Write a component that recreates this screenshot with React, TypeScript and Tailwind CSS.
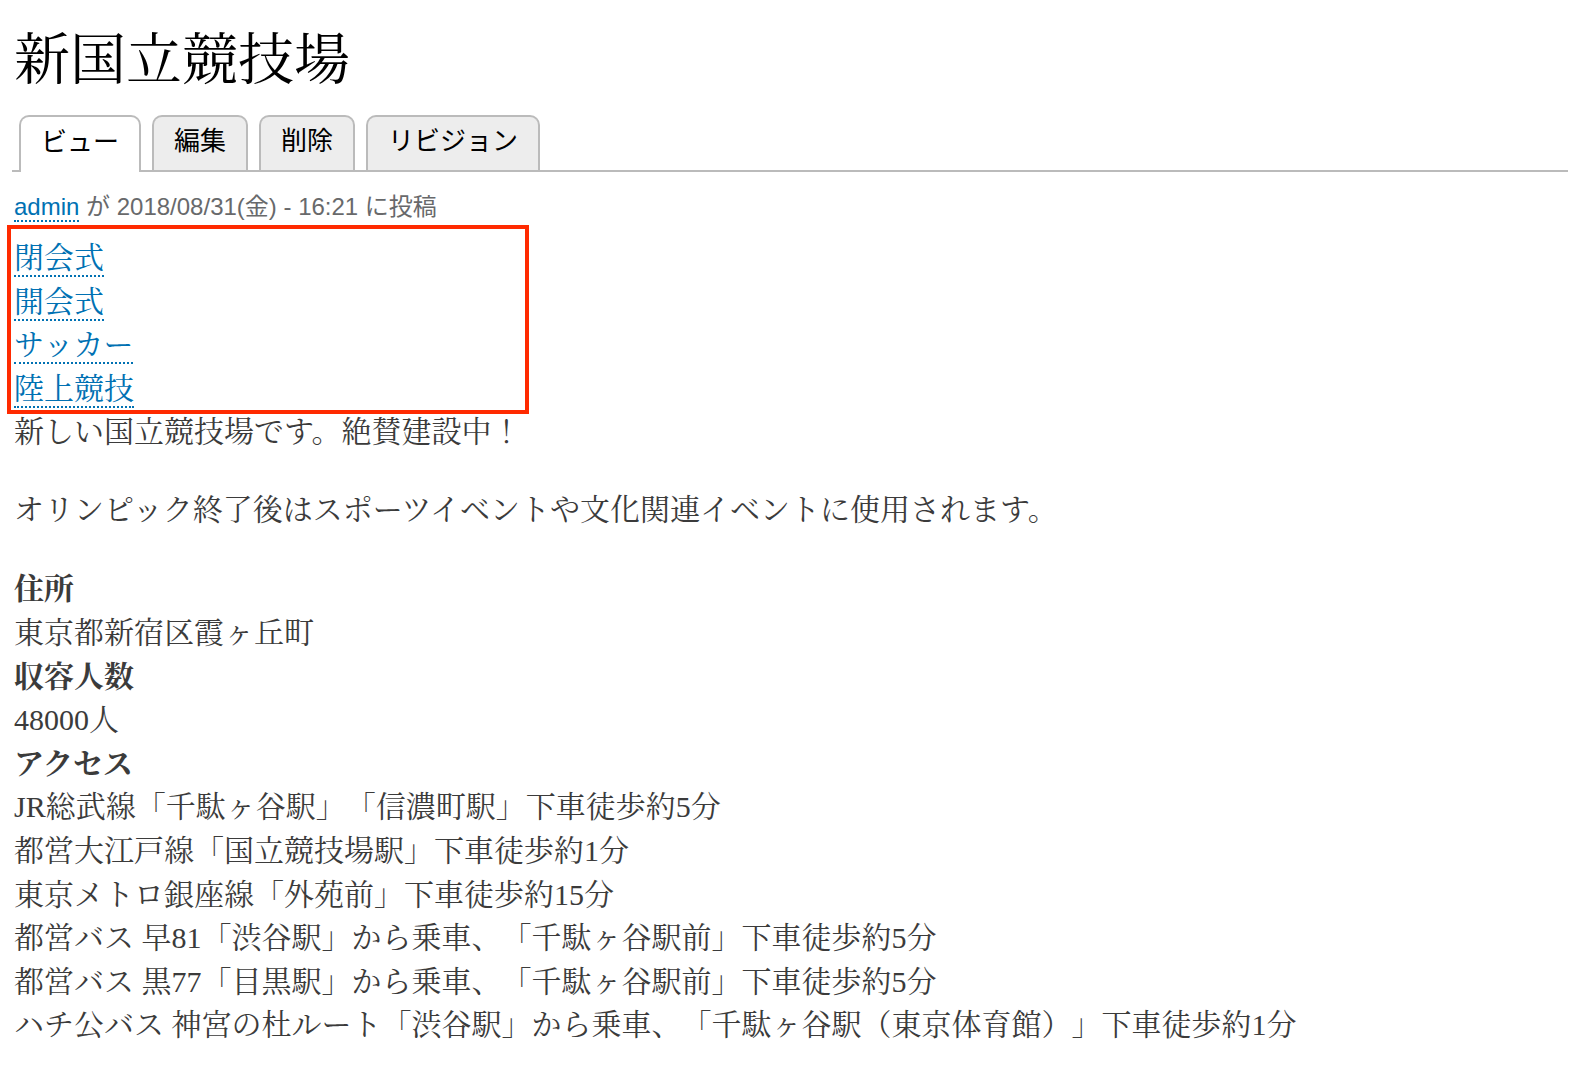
import React from "react";

const serif = '"Liberation Serif", "Noto Serif CJK JP", "Noto Sans CJK JP", serif';
const sans = '"Liberation Sans", "Noto Sans CJK JP", sans-serif';

function Tab({ label, active }: { label: string; active?: boolean }) {
  return (
    <li
      className={
        "px-[20px] pb-[4px] flex items-center rounded-t-[10px] border-2 border-b-0 border-[#bbbbbb] text-[26px] text-black " +
        (active ? "bg-white -mb-[2px] h-[57px]" : "bg-[#ededed] h-[55px]")
      }
      style={{ fontFamily: sans }}
    >
      {label}
    </li>
  );
}

function TagLink({ children }: { children: React.ReactNode }) {
  return (
    <div className="h-[43.6px] leading-[43.6px]">
      <a className="text-[#0071b3] border-b-2 border-dotted border-[#0071b3] pb-[1px]">{children}</a>
    </div>
  );
}

export default function App() {
  const access = [
    "JR総武線「千駄ヶ谷駅」「信濃町駅」下車徒歩約5分",
    "都営大江戸線「国立競技場駅」下車徒歩約1分",
    "東京メトロ銀座線「外苑前」下車徒歩約15分",
    "都営バス 早81「渋谷駅」から乗車、「千駄ヶ谷駅前」下車徒歩約5分",
    "都営バス 黒77「目黒駅」から乗車、「千駄ヶ谷駅前」下車徒歩約5分",
    "ハチ公バス 神宮の杜ルート「渋谷駅」から乗車、「千駄ヶ谷駅（東京体育館）」下車徒歩約1分",
  ];
  return (
    <div className="bg-white [text-spacing-trim:space-all]" style={{ fontFamily: serif }}>
      <div className="pl-[14px] pr-[13px] pt-[27px]">
        <h1 className="text-[56px] leading-[66px] text-black font-normal">新国立競技場</h1>
      </div>
      <div className="mt-[22px] ml-[12px] mr-[13px] border-b-2 border-[#bbbbbb]">
        <ul className="flex items-end gap-[11px] pl-[7px]">
          <Tab label="ビュー" active />
          <Tab label="編集" />
          <Tab label="削除" />
          <Tab label="リビジョン" />
        </ul>
      </div>
      <div className="pl-[14px] pr-[13px]">
        <div
          className="mt-[20px] text-[24px] leading-[30px] text-[#68696b]"
          style={{ fontFamily: sans }}
        >
          <a className="text-[#0071b3] border-b-2 border-dotted border-[#0071b3]">admin</a> が 2018/08/31(金) - 16:21 に投稿
        </div>
        <div className="mt-[14px] text-[30px] text-[#3b3b3b]">
          <div className="relative">
            <TagLink>閉会式</TagLink>
            <TagLink>開会式</TagLink>
            <TagLink>サッカー</TagLink>
            <TagLink>陸上競技</TagLink>
            <div className="absolute -left-[7px] -top-[11px] w-[522px] h-[189px] border-4 border-[#ff2a00] pointer-events-none" />
          </div>
          <p className="leading-[43.6px]">新しい国立競技場です。絶賛建設中！</p>
          <p className="leading-[43.6px] mt-[34.4px]">オリンピック終了後はスポーツイベントや文化関連イベントに使用されます。</p>
          <div className="mt-[35.4px] leading-[43.6px]">
            <div className="font-bold">住所</div>
            <div>東京都新宿区霞ヶ丘町</div>
            <div className="font-bold">収容人数</div>
            <div>48000人</div>
            <div className="font-bold">アクセス</div>
            {access.map((a) => (
              <div key={a}>{a}</div>
            ))}
          </div>
        </div>
      </div>
    </div>
  );
}
